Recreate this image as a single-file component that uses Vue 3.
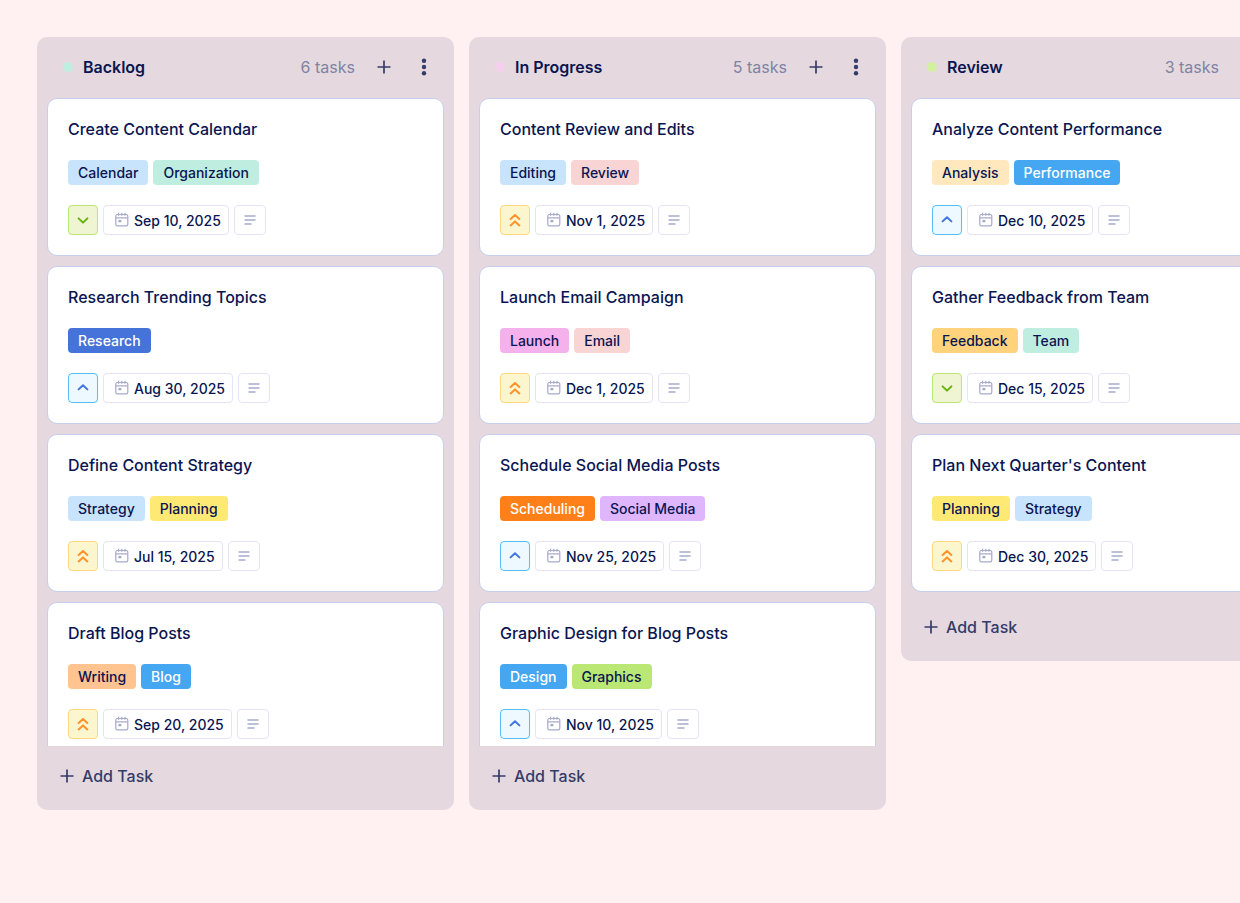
<script setup>
const columns = [
  {
    name: 'Backlog',
    count: 6,
    dot: 'mint',
    tasks: [
      { title: 'Create Content Calendar', tags: [['Calendar', 'sky'], ['Organization', 'mint']], priority: 'low', date: 'Sep 10, 2025' },
      { title: 'Research Trending Topics', tags: [['Research', 'royal']], priority: 'medium', date: 'Aug 30, 2025' },
      { title: 'Define Content Strategy', tags: [['Strategy', 'sky'], ['Planning', 'yellow']], priority: 'high', date: 'Jul 15, 2025' },
      { title: 'Draft Blog Posts', tags: [['Writing', 'peach'], ['Blog', 'blue']], priority: 'high', date: 'Sep 20, 2025' },
    ],
  },
  {
    name: 'In Progress',
    count: 5,
    dot: 'rose',
    tasks: [
      { title: 'Content Review and Edits', tags: [['Editing', 'sky'], ['Review', 'blush']], priority: 'high', date: 'Nov 1, 2025' },
      { title: 'Launch Email Campaign', tags: [['Launch', 'pink'], ['Email', 'blush']], priority: 'high', date: 'Dec 1, 2025' },
      { title: 'Schedule Social Media Posts', tags: [['Scheduling', 'orange'], ['Social Media', 'lilac']], priority: 'medium', date: 'Nov 25, 2025' },
      { title: 'Graphic Design for Blog Posts', tags: [['Design', 'blue'], ['Graphics', 'lime']], priority: 'medium', date: 'Nov 10, 2025' },
    ],
  },
  {
    name: 'Review',
    count: 3,
    dot: 'spring',
    tasks: [
      { title: 'Analyze Content Performance', tags: [['Analysis', 'cream'], ['Performance', 'blue']], priority: 'medium', date: 'Dec 10, 2025' },
      { title: 'Gather Feedback from Team', tags: [['Feedback', 'amber'], ['Team', 'mint']], priority: 'low', date: 'Dec 15, 2025' },
      { title: "Plan Next Quarter's Content", tags: [['Planning', 'yellow'], ['Strategy', 'sky']], priority: 'high', date: 'Dec 30, 2025' },
    ],
  },
]

const arrows = {
  low: ['M4.6 7.4L9 11.6l4.4-4.2'],
  medium: ['M4.6 10.4L9 6.2l4.4 4.2'],
  high: ['M4.6 8L9 4l4.4 4', 'M4.6 14.4l4.4-4 4.4 4'],
}
</script>

<template>
  <main class="board">
    <section v-for="column in columns" :key="column.name" class="column">
      <header class="column-head">
        <span class="dot" :class="column.dot"></span>
        <h2>{{ column.name }}</h2>
        <span class="count">{{ column.count }} tasks</span>
        <button type="button" class="icon-button" :aria-label="'Add task to ' + column.name">
          <svg width="14" height="14" viewBox="0 0 14 14"><path d="M7 0.5v13M0.5 7h13" /></svg>
        </button>
        <button type="button" class="icon-button" :aria-label="column.name + ' options'">
          <svg class="dots" width="6" height="18" viewBox="0 0 6 18">
            <circle cx="3" cy="2.7" r="2.2" />
            <circle cx="3" cy="9" r="2.2" />
            <circle cx="3" cy="15.3" r="2.2" />
          </svg>
        </button>
      </header>

      <div class="cards">
        <article v-for="task in column.tasks" :key="task.title" class="card">
          <h3>{{ task.title }}</h3>
          <div class="tags">
            <span v-for="[label, color] in task.tags" :key="label" class="tag" :class="color">{{ label }}</span>
          </div>
          <div class="meta">
            <button type="button" class="priority" :class="task.priority" :aria-label="'Priority: ' + task.priority">
              <svg width="18" height="18" viewBox="0 0 18 18">
                <path v-for="d in arrows[task.priority]" :key="d" :d="d" />
              </svg>
            </button>
            <button type="button" class="chip date">
              <svg width="14" height="15" viewBox="0 0 14 15">
                <rect x="0.8" y="2.5" width="12" height="11.4" rx="1.6" />
                <path d="M1 5.8h11.6M3.6 0.7v3M6.8 0.7v3M10 0.7v3" />
                <rect class="day" x="3.4" y="7.9" width="3" height="2.4" rx="0.5" />
              </svg>
              <span>{{ task.date }}</span>
            </button>
            <button type="button" class="chip note" aria-label="Description">
              <svg width="12" height="10" viewBox="0 0 12 10"><path d="M0.5 1h11M0.5 5h11M0.5 9h7" /></svg>
            </button>
          </div>
        </article>
      </div>

      <footer class="column-foot">
        <button type="button" class="add">
          <svg width="14" height="14" viewBox="0 0 14 14"><path d="M7 0.5v13M0.5 7h13" /></svg>
          <span>Add Task</span>
        </button>
      </footer>
    </section>
  </main>
</template>

<style>
body {
  margin: 0;
  background: #fff1f1;
}
</style>

<style scoped>
.board {
  box-sizing: border-box;
  height: 100vh;
  padding: 37px;
  display: flex;
  align-items: flex-start;
  gap: 15px;
  overflow: hidden;
  background: #fff1f1;
  color: #0a1551;
  font-family: Inter, "Liberation Sans", sans-serif;
}

button {
  margin: 0;
  padding: 0;
  border: 0;
  background: none;
  color: inherit;
  font: inherit;
  cursor: pointer;
}

svg {
  display: block;
  flex: none;
  fill: none;
  stroke: currentColor;
}

.column {
  flex: 0 0 417px;
  display: flex;
  flex-direction: column;
  max-height: calc(100vh - 130px);
  border-radius: 10px;
  background: #e5d9df;
}

.column-head {
  box-sizing: border-box;
  flex: none;
  display: flex;
  align-items: center;
  height: 61px;
  padding: 0 20px 2px 26px;
}

.dot {
  width: 10px;
  height: 10px;
  border-radius: 50%;
}

h2 {
  flex: 1;
  margin: 0 0 0 10px;
  font-size: 16px;
  font-weight: 600;
  line-height: 24px;
}

.count {
  margin-right: 19px;
  color: #7f83a3;
  font-size: 16px;
  line-height: 24px;
}

.icon-button {
  display: grid;
  place-items: center;
  width: 20px;
  height: 24px;
  color: #343c6a;
}

.icon-button + .icon-button {
  margin-left: 20px;
}

.icon-button svg,
.add svg {
  stroke-width: 1.7;
}

.icon-button .dots {
  fill: currentColor;
  stroke: none;
}

.cards {
  flex: 0 1 auto;
  min-height: 0;
  display: flex;
  flex-direction: column;
  gap: 10px;
  padding: 0 10px 5px;
  overflow-y: auto;
  scrollbar-width: none;
}

.card {
  flex: none;
  padding: 19px 20px 20px;
  border: 1px solid #c8ceed;
  border-radius: 10px;
  background: #fff;
}

h3 {
  margin: 0 0 20px;
  font-size: 16px;
  font-weight: 500;
  line-height: 22px;
}

.tags {
  display: flex;
  gap: 5px;
  margin-bottom: 20px;
}

.tag {
  padding: 0 10px;
  border-radius: 4px;
  font-size: 14px;
  font-weight: 500;
  line-height: 25px;
}

.meta {
  display: flex;
  gap: 5px;
}

.priority,
.chip {
  box-sizing: border-box;
  height: 30px;
  display: flex;
  align-items: center;
  justify-content: center;
  border: 1px solid #e3e5f5;
  border-radius: 4px;
}

.priority {
  width: 30px;
}

.priority svg {
  stroke-width: 2;
  stroke-linecap: round;
  stroke-linejoin: round;
}

.priority.low {
  border-color: #bbe774;
  background: #eff5d2;
  color: #64b20c;
}

.priority.medium {
  border-color: #57bdf8;
  background: #edf8ff;
  color: #4277e0;
}

.priority.high {
  border-color: #ffd681;
  background: #fcf6cf;
  color: #ff9228;
}

.date {
  gap: 5px;
  padding: 0 7px 0 11px;
  font-size: 14px;
  font-weight: 500;
}

.date svg {
  color: #a5aaca;
  stroke-width: 1.2;
  margin-bottom: 2px;
}

.date .day {
  fill: currentColor;
  stroke: none;
}

.note {
  width: 32px;
  color: #a5aaca;
}

.note svg {
  stroke-width: 1.3;
}

.column-foot {
  flex: none;
  height: 64px;
  padding: 0 23px;
}

.add {
  display: flex;
  align-items: center;
  gap: 8px;
  height: 60px;
  color: #343c6a;
  font-size: 16px;
  font-weight: 500;
}

.mint { background: #bfeee0; }
.rose { background: #f5d0ee; }
.spring { background: #d3f09e; }
.sky { background: #c8e4fc; }
.royal { background: #4573d9; color: #fff; }
.yellow { background: #ffe975; }
.peach { background: #ffc48f; }
.blue { background: #45a7f2; color: #fff; }
.blush { background: #f9d4d4; }
.pink { background: #f5b1eb; }
.orange { background: #ff7f18; color: #fff; }
.lilac { background: #dfb6fc; }
.lime { background: #bbe774; }
.cream { background: #ffe8bd; }
.amber { background: #ffd27c; }
</style>
